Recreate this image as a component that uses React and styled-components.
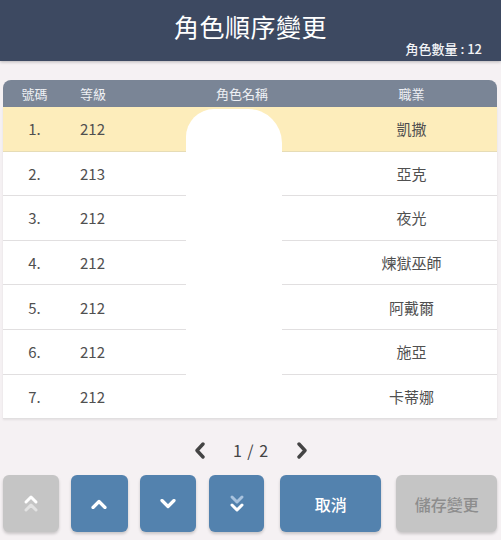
import React from 'react'
import { styled, createGlobalStyle } from 'styled-components'

const GlobalStyle = createGlobalStyle`
    html, body {
        margin: 0;
        padding: 0;
        background: #f5f1f3;
    }
    body {
        font-family: "Noto Sans CJK TC", "Noto Sans", sans-serif;
    }
`;

const characters = [
    { no: 1, level: 212, job: '凱撒' },
    { no: 2, level: 213, job: '亞克' },
    { no: 3, level: 212, job: '夜光' },
    { no: 4, level: 212, job: '煉獄巫師' },
    { no: 5, level: 212, job: '阿戴爾' },
    { no: 6, level: 212, job: '施亞' },
    { no: 7, level: 212, job: '卡蒂娜' },
];

const Chevron = ({ dir = 'up', color = '#fff' }) => (
    <svg width="16" height="10" viewBox="0 0 16 10">
        <polyline
            points={dir === 'up' ? '2,8.5 8,2.5 14,8.5' : '2,1.5 8,7.5 14,1.5'}
            fill="none" stroke={color} strokeWidth="3.2"
            strokeLinecap="round" strokeLinejoin="round" />
    </svg>
);

const DoubleChevron = ({ dir = 'up', near = '#fff', far = 'rgba(255,255,255,0.55)' }) => {
    const up = dir === 'up';
    return (
        <svg width="16" height="22" viewBox="0 0 16 22">
            <polyline
                points={up ? '3,9 8,4 13,9' : '3,4 8,9 13,4'}
                fill="none" stroke={up ? near : far} strokeWidth="3"
                strokeLinecap="round" strokeLinejoin="round" />
            <polyline
                points={up ? '3,17 8,12 13,17' : '3,12 8,17 13,12'}
                fill="none" stroke={up ? far : near} strokeWidth="3"
                strokeLinecap="round" strokeLinejoin="round" />
        </svg>
    );
};

const PageArrow = ({ dir }) => (
    <svg width="12" height="17" viewBox="0 0 12 17">
        <polyline
            points={dir === 'left' ? '9,2 3,8.5 9,15' : '3,2 9,8.5 3,15'}
            fill="none" stroke="#444" strokeWidth="3.4"
            strokeLinecap="round" strokeLinejoin="round" />
    </svg>
);

const App = () => {
    return (
        <Page>
            <GlobalStyle />
            <Header>
                <Title>角色順序變更</Title>
                <Count>角色數量 : 12</Count>
            </Header>

            <Main>
                <TableHead>
                    <HeadCell>號碼</HeadCell>
                    <HeadCell $align="left">等級</HeadCell>
                    <HeadCell>角色名稱</HeadCell>
                    <HeadCell>職業</HeadCell>
                </TableHead>

                <TableBody>
                    {characters.map((c) => (
                        <Row key={c.no} $selected={c.no === 1}>
                            <Cell>{c.no}.</Cell>
                            <Cell $align="left">{c.level}</Cell>
                            <Cell />
                            <Cell>{c.job}</Cell>
                        </Row>
                    ))}
                    <Redaction />
                </TableBody>

                <Pager>
                    <PageArrow dir="left" />
                    <PageText>1 / 2</PageText>
                    <PageArrow dir="right" />
                </Pager>

                <ButtonBar>
                    <ActionButton $disabled>
                        <DoubleChevron dir="up" near="#fff" far="rgba(255,255,255,0.5)" />
                    </ActionButton>
                    <ActionButton $w="57px"><Chevron dir="up" /></ActionButton>
                    <ActionButton><Chevron dir="down" /></ActionButton>
                    <ActionButton $space="13px">
                        <DoubleChevron dir="down" near="#fff" far="#a9c3de" />
                    </ActionButton>
                    <ActionButton $w="101px" $space="16px">取消</ActionButton>
                    <ActionButton $w="101px" $space="15px" $disabled>儲存變更</ActionButton>
                </ButtonBar>
            </Main>
        </Page>
    )
}

export default App

const Page = styled.div`
    width: 501px;
    height: 540px;
    display: flex;
    flex-direction: column;
    overflow: hidden;
`;

const Header = styled.header`
    height: 61px;
    box-sizing: border-box;
    padding: 10px 19px 0 0;
    background: #3d4961;
    box-shadow: 0 1px 3px rgba(0, 0, 0, 0.25);
    display: flex;
    flex-direction: column;
`;

const Title = styled.h1`
    margin: 0;
    text-align: center;
    padding-left: 19px;
    font-size: 25px;
    line-height: 32px;
    font-weight: 400;
    color: #ffffff;
    letter-spacing: 0.5px;
`;

const Count = styled.div`
    align-self: flex-end;
    font-size: 13px;
    line-height: 14px;
    font-weight: 500;
    color: #f2f3f6;
`;

const Main = styled.main`
    padding: 19px 4px 0 3px;
    display: flex;
    flex-direction: column;
`;

const Columns = styled.div`
    display: grid;
    grid-template-columns: 63px 64px 224px 1fr;
    align-items: center;
`;

const TableHead = styled(Columns)`
    height: 27px;
    background: #7a8596;
    border-radius: 8px 8px 0 0;
`;

const HeadCell = styled.div`
    text-align: ${p => p.$align || 'center'};
    padding-left: ${p => p.$align === 'left' ? '14px' : '0'};
    font-size: 13px;
    color: #eef0f4;
    &:last-child { padding-right: 28px; }
`;

const TableBody = styled.div`
    position: relative;
    box-shadow: 0 1px 2px rgba(0, 0, 0, 0.08);
`;

const Row = styled(Columns)`
    height: 44.6px;
    box-sizing: border-box;
    background: ${p => p.$selected ? '#fdedbb' : '#ffffff'};
    border-bottom: 1.5px solid ${p => p.$selected ? '#e6dcb6' : '#e1dfe0'};
`;

const Cell = styled.div`
    text-align: ${p => p.$align || 'center'};
    padding-left: ${p => p.$align === 'left' ? '14px' : '0'};
    font-size: 15px;
    color: #505050;
    &:last-child { padding-right: 28px; }
`;

const Redaction = styled.div`
    position: absolute;
    left: 183px;
    top: 2px;
    width: 96px;
    bottom: 2px;
    background: #ffffff;
    border-radius: 28px 34px 6px 6px;
`;

const Pager = styled.div`
    margin-top: 21px;
    height: 20px;
    display: flex;
    justify-content: center;
    align-items: center;
    gap: 27px;
    padding-left: 2px;
`;

const PageText = styled.span`
    font-size: 16px;
    color: #444;
    letter-spacing: 1px;
`;

const ButtonBar = styled.div`
    margin-top: 15px;
    display: flex;
`;

const ActionButton = styled.button`
    width: ${p => p.$w || '56px'};
    height: 57px;
    margin-left: ${p => p.$space || '12px'};
    &:first-child { margin-left: 0; }
    border: none;
    border-radius: 6px;
    padding: 0;
    display: flex;
    align-items: center;
    justify-content: center;
    background: ${p => p.$disabled ? '#c5c5c5' : '#5382ae'};
    color: ${p => p.$disabled ? '#8d8d8d' : '#ffffff'};
    box-shadow: 0 2px 3px rgba(0, 0, 0, 0.18);
    font-family: inherit;
    font-size: 16px;
    font-weight: 500;
`;
